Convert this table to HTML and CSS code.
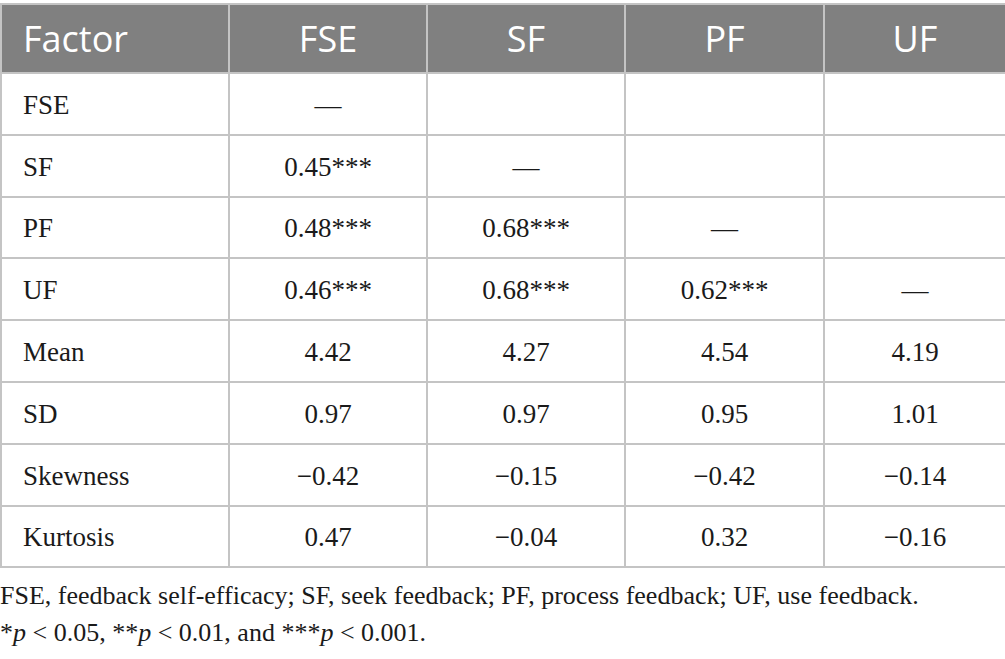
FILE: index.html
```html
<!DOCTYPE html>
<html>
<head>
<meta charset="utf-8">
<link rel="stylesheet" href="styles.css">
</head>
<body>
<table class="corr">
  <colgroup>
    <col class="c1"><col class="c2"><col class="c3"><col class="c4"><col class="c5">
  </colgroup>
  <thead>
    <tr><th class="first">Factor</th><th>FSE</th><th>SF</th><th>PF</th><th>UF</th></tr>
  </thead>
  <tbody>
    <tr><td class="first">FSE</td><td>—</td><td></td><td></td><td></td></tr>
    <tr><td class="first">SF</td><td>0.45***</td><td>—</td><td></td><td></td></tr>
    <tr><td class="first">PF</td><td>0.48***</td><td>0.68***</td><td>—</td><td></td></tr>
    <tr><td class="first">UF</td><td>0.46***</td><td>0.68***</td><td>0.62***</td><td>—</td></tr>
    <tr><td class="first">Mean</td><td>4.42</td><td>4.27</td><td>4.54</td><td>4.19</td></tr>
    <tr><td class="first">SD</td><td>0.97</td><td>0.97</td><td>0.95</td><td>1.01</td></tr>
    <tr><td class="first">Skewness</td><td>−0.42</td><td>−0.15</td><td>−0.42</td><td>−0.14</td></tr>
    <tr><td class="first">Kurtosis</td><td>0.47</td><td>−0.04</td><td>0.32</td><td>−0.16</td></tr>
  </tbody>
</table>
<div class="notes">
  <p>FSE, feedback self-efficacy; SF, seek feedback; PF, process feedback; UF, use feedback.</p>
  <p>*<i>p</i> &lt; 0.05, **<i>p</i> &lt; 0.01, and ***<i>p</i> &lt; 0.001.</p>
</div>
</body>
</html>
```
FILE: styles.css
```css
html, body {
  margin: 0;
  padding: 0;
  background: #ffffff;
}
body {
  padding-top: 3px;
  font-family: "Liberation Serif", "Times New Roman", "DejaVu Serif", serif;
  color: #1a1a1a;
}
.corr {
  width: 1005px;
  border-collapse: collapse;
  table-layout: fixed;
}
.c1 { width: 228px; }
.c2 { width: 198px; }
.c3 { width: 198px; }
.c4 { width: 199px; }
.c5 { width: 182px; }
.corr th, .corr td {
  border: 2px solid #c4c4c4;
  text-align: center;
  padding: 0;
}
.corr th {
  background: #808080;
  color: #ffffff;
  font-family: "Open Sans", "Noto Sans", sans-serif;
  font-weight: 400;
  font-size: 36px;
  height: 67px;
}
.corr td {
  font-family: "Liberation Serif", "Times New Roman", "DejaVu Serif", serif;
  font-size: 27px;
  height: 56.8px;
  padding-top: 3px;
}
.corr .first {
  text-align: left;
  padding-left: 21px;
}
.notes {
  font-family: "Liberation Serif", "Times New Roman", "DejaVu Serif", serif;
  font-size: 26px;
  line-height: 37px;
  margin-top: 9px;
  color: #1a1a1a;
}
.notes p {
  margin: 0;
}
```
